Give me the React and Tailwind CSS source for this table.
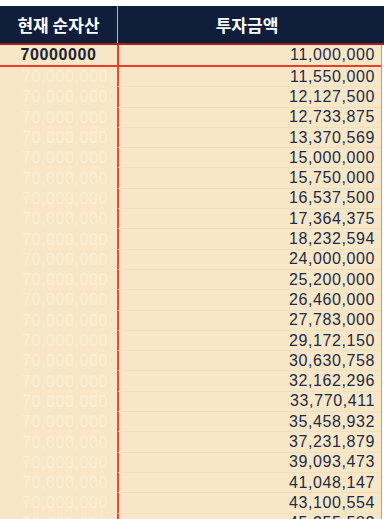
import React from "react";

const values = [
  "11,550,000","12,127,500","12,733,875","13,370,569","15,000,000","15,750,000",
  "16,537,500","17,364,375","18,232,594","24,000,000","25,200,000","26,460,000",
  "27,783,000","29,172,150","30,630,758","32,162,296","33,770,411","35,458,932",
  "37,231,879","39,093,473","41,048,147","43,100,554","45,255,582",
];

export default function App() {
  return (
    <div className="w-[384px] h-[519px] overflow-hidden bg-white pt-[6px]" style={{ fontFamily: '"Liberation Sans", Arial, sans-serif' }}>
      <div className="flex h-[37px] bg-[#0f1e3b] text-white font-bold text-[17px]" style={{ fontFamily: '"Noto Sans CJK KR", "Liberation Sans", sans-serif' }}>
        <div className="w-[118px] flex items-center justify-center border-r border-[#b9b4a6]">현재 순자산</div>
        <div className="flex-1 flex items-center justify-center pr-[8px]">투자금액</div>
      </div>
      <div className="h-[2px] bg-[#a3201d]" />
      <div className="w-[382px] border-r border-[#e08a80]">
        <div className="flex h-[22px] border-b-2 border-[#ee3b25] bg-[#f7e7c7]">
          <div className="w-[117px] flex items-center justify-center font-bold text-[16px] tracking-[0.6px] text-[#1c2333]">70000000</div>
          <div className="flex-1 border-l-2 border-[#ee3b25] flex items-center justify-end pr-[6px] text-[16px] tracking-[0.6px] text-[#1d2a48]">11,000,000</div>
        </div>
        {values.map((v, i) => (
          <div key={i} className="flex h-[20.3px] bg-[#f7e7c7]">
            <div className="w-[117px] flex items-center justify-end pr-[9px] text-[16px] tracking-[0.6px] text-[#fcefd2]">70,000,000</div>
            <div className="flex-1 border-l-2 border-[#ee4a2e] border-b border-b-[#ecdfc3] flex items-center justify-end pr-[6px] text-[16px] tracking-[0.6px] text-[#1d2a48]">{v}</div>
          </div>
        ))}
      </div>
    </div>
  );
}
